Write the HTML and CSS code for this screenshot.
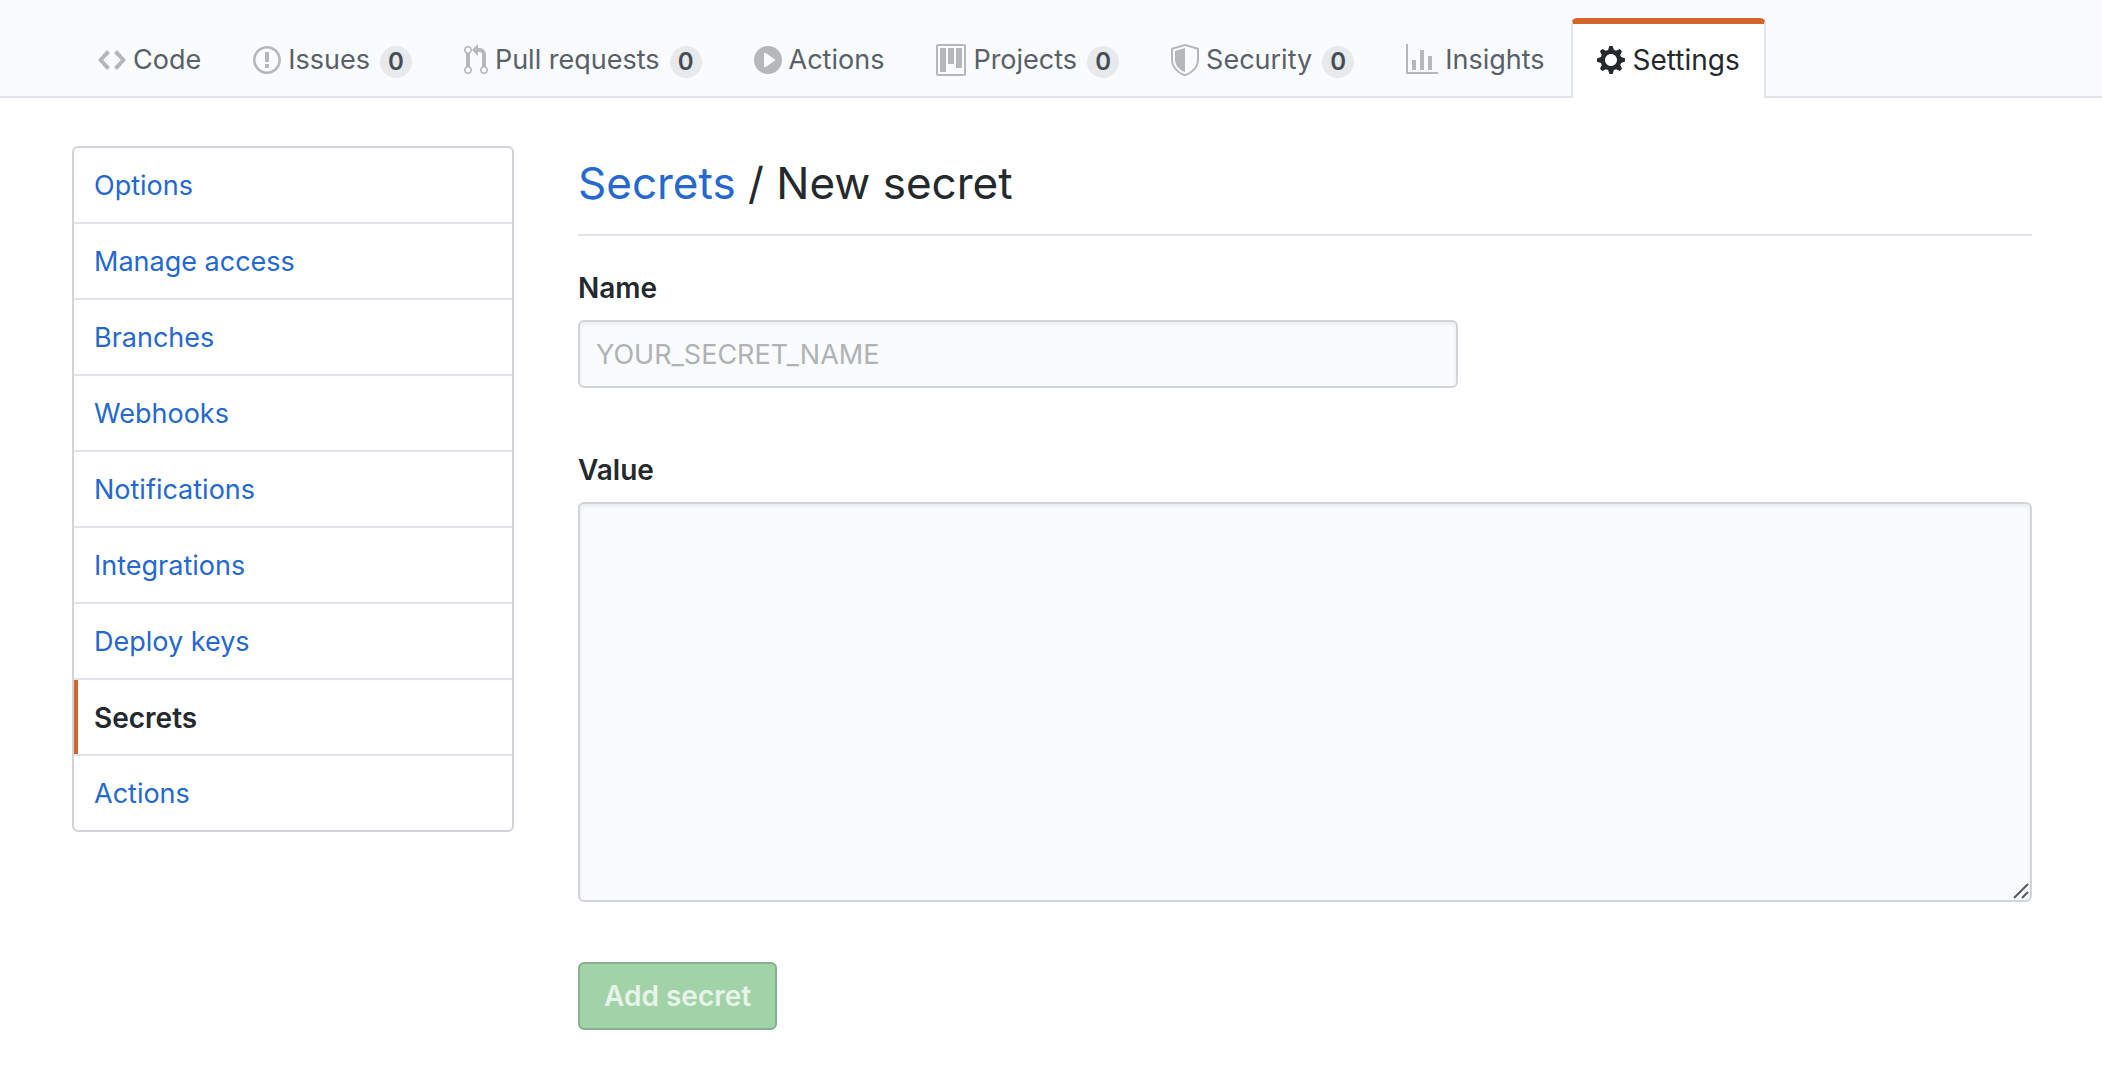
FILE: index.html
```html
<!DOCTYPE html>
<html lang="en">
<head>
    <meta charset="UTF-8">
    <meta name="viewport" content="width=device-width, initial-scale=1.0">
    <title>New secret</title>
    <link rel="stylesheet" href="styles.css">
</head>
<body>
    <header class="repohead">
        <nav class="tabs" aria-label="Repository">
            <a class="tab" href="#code">
                <svg class="icon" width="28" height="32" viewBox="0 0 14 16"><path fill-rule="evenodd" d="M9.5 3L8 4.5 11.5 8 8 11.5 9.5 13 14 8 9.5 3zm-5 0L0 8l4.5 5L6 11.5 2.5 8 6 4.5 4.5 3z"/></svg>
                <span>Code</span>
            </a>
            <a class="tab" href="#issues">
                <svg class="icon" width="28" height="32" viewBox="0 0 14 16"><path fill-rule="evenodd" d="M7 2.3c3.14 0 5.7 2.56 5.7 5.7s-2.56 5.7-5.7 5.7A5.71 5.71 0 011.3 8c0-3.14 2.56-5.7 5.7-5.7zM7 1C3.14 1 0 4.14 0 8s3.14 7 7 7 7-3.14 7-7-3.14-7-7-7zm1 3H6v5h2V4zm0 6H6v2h2v-2z"/></svg>
                <span>Issues</span>
                <span class="counter">0</span>
            </a>
            <a class="tab" href="#pulls">
                <svg class="icon" width="24" height="32" viewBox="0 0 12 16"><path fill-rule="evenodd" d="M11 11.28V5c-.03-.78-.34-1.47-.94-2.06C9.46 2.35 8.78 2.03 8 2H7V0L4 3l3 3V4h1c.27.02.48.11.69.31.21.2.3.42.31.69v6.28A1.993 1.993 0 0010 15a1.993 1.993 0 001-3.72zm-1 2.92c-.66 0-1.2-.55-1.2-1.2 0-.65.55-1.2 1.2-1.2.65 0 1.2.55 1.2 1.2 0 .65-.55 1.2-1.2 1.2zM4 3c0-1.11-.89-2-2-2a1.993 1.993 0 00-1 3.72v6.56A1.993 1.993 0 002 15a1.993 1.993 0 001-3.72V4.72c.59-.34 1-.98 1-1.72zm-.8 10c0 .66-.55 1.2-1.2 1.2-.65 0-1.2-.55-1.2-1.2 0-.65.55-1.2 1.2-1.2.65 0 1.2.55 1.2 1.2zM2 4.2C1.34 4.2.8 3.65.8 3c0-.65.55-1.2 1.2-1.2.65 0 1.2.55 1.2 1.2 0 .65-.55 1.2-1.2 1.2z"/></svg>
                <span>Pull requests</span>
                <span class="counter">0</span>
            </a>
            <a class="tab" href="#actions">
                <svg class="icon" width="28" height="32" viewBox="0 0 14 16"><path fill-rule="evenodd" d="M14 8A7 7 0 110 8a7 7 0 0114 0zm-8.223 3.482l4.599-3.066a.5.5 0 000-.832L5.777 4.518A.5.5 0 005 4.934v6.132a.5.5 0 00.777.416z"/></svg>
                <span>Actions</span>
            </a>
            <a class="tab" href="#projects">
                <svg class="icon" width="30" height="32" viewBox="0 0 15 16"><path fill-rule="evenodd" d="M10 12h3V2h-3v10zm-4-2h3V2H6v8zm-4 4h3V2H2v12zm-1 1h13V1H1v14zM14 0H1a1 1 0 00-1 1v14a1 1 0 001 1h13a1 1 0 001-1V1a1 1 0 00-1-1z"/></svg>
                <span>Projects</span>
                <span class="counter">0</span>
            </a>
            <a class="tab" href="#security">
                <svg class="icon" width="28" height="32" viewBox="0 0 14 16"><path fill-rule="evenodd" d="M0 2l7-2 7 2v6.02C14 12.69 8.69 16 7 16c-1.69 0-7-3.31-7-7.98V2zm1 .75L7 1l6 1.75v5.268C13 12.104 8.449 15 7 15c-1.449 0-6-2.896-6-6.982V2.75zm1 .75L7 2v12c-1.207 0-5-2.482-5-5.985V3.5z"/></svg>
                <span>Security</span>
                <span class="counter">0</span>
            </a>
            <a class="tab" href="#insights">
                <svg class="icon" width="32" height="32" viewBox="0 0 16 16"><path fill-rule="evenodd" d="M16 14v1H0V0h1v14h15zM5 13H3V8h2v5zm4 0H7V3h2v10zm4 0h-2V6h2v7z"/></svg>
                <span>Insights</span>
            </a>
            <a class="tab selected" href="#settings" aria-current="page">
                <svg class="icon" width="28" height="32" viewBox="0 0 14 16"><path fill-rule="evenodd" d="M14 8.77v-1.6l-1.94-.64-.45-1.09.88-1.84-1.13-1.13-1.81.91-1.09-.45-.69-1.92h-1.6l-.63 1.94-1.11.45-1.84-.88-1.13 1.13.91 1.81-.45 1.09L0 7.23v1.59l1.94.64.45 1.09-.88 1.84 1.13 1.13 1.81-.91 1.09.45.69 1.92h1.59l.63-1.94 1.11-.45 1.84.88 1.13-1.13-.92-1.81.47-1.09L14 8.75v.02zM7 11c-1.66 0-3-1.34-3-3s1.34-3 3-3 3 1.34 3 3-1.34 3-3 3z"/></svg>
                <span>Settings</span>
            </a>
        </nav>
    </header>

    <div class="container">
        <nav class="menu" aria-label="Settings">
            <a class="menu-item" href="#options">Options</a>
            <a class="menu-item" href="#access">Manage access</a>
            <a class="menu-item" href="#branches">Branches</a>
            <a class="menu-item" href="#hooks">Webhooks</a>
            <a class="menu-item" href="#notifications">Notifications</a>
            <a class="menu-item" href="#installations">Integrations</a>
            <a class="menu-item" href="#keys">Deploy keys</a>
            <a class="menu-item selected" href="#secrets" aria-current="page">Secrets</a>
            <a class="menu-item" href="#settings-actions">Actions</a>
        </nav>

        <main class="content">
            <h1 class="subhead"><a href="#secrets">Secrets</a> / New secret</h1>
            <form>
                <div class="form-group">
                    <label for="secret-name">Name</label>
                    <input class="form-control name-input" type="text" id="secret-name" placeholder="YOUR_SECRET_NAME">
                </div>
                <div class="form-group">
                    <label for="secret-value">Value</label>
                    <div class="textarea-wrap">
                        <textarea class="form-control" id="secret-value"></textarea>
                        <svg class="grip" width="16" height="16" viewBox="0 0 16 16"><path d="M1 15L15 1M9 15l6-6"/></svg>
                    </div>
                </div>
                <button class="btn" type="submit" disabled>Add secret</button>
            </form>
        </main>
    </div>
</body>
</html>
```
FILE: styles.css
```css
* {
    box-sizing: border-box;
}
body {
    margin: 0;
    background: #fff;
    color: #24292e;
    font-family: Inter, "Liberation Sans", sans-serif;
    font-size: 27px;
    line-height: 42px;
}
a {
    color: #2468d0;
    text-decoration: none;
}

/* repository tabs */
.repohead {
    background: #fafbfc;
    border-bottom: 2px solid #e1e4e8;
    padding: 18px 72px 0;
}
.tabs {
    display: flex;
    margin-bottom: -2px;
}
.tab {
    display: flex;
    align-items: center;
    height: 80px;
    padding: 0 24px 2px;
    border: 2px solid transparent;
    border-top-width: 6px;
    border-bottom: 0;
    border-radius: 6px 6px 0 0;
    color: #586069;
    white-space: nowrap;
}
.tab.selected {
    background: #fff;
    border-color: #d2662a #e1e4e8 transparent;
    color: #24292e;
    font-size: 28px;
}
.icon {
    flex: none;
    margin-right: 7px;
    fill: #b6b7b9;
}
.selected .icon {
    margin-right: 8px;
    fill: #24292e;
}
.counter {
    min-width: 32px;
    height: 32px;
    margin: 4px 0 0 10px;
    border-radius: 16px;
    background: #e8e9eb;
    color: #444d56;
    font-size: 24px;
    font-weight: 600;
    line-height: 32px;
    text-align: center;
}

.container {
    display: flex;
    align-items: flex-start;
    gap: 64px;
    padding: 48px 70px 48px 72px;
}

/* settings menu */
.menu {
    flex: none;
    width: 442px;
    border: 2px solid #d1d5da;
    border-radius: 6px;
    overflow: hidden;
}
.menu-item {
    display: block;
    padding: 17px 20px 15px;
    border-bottom: 2px solid #e1e4e8;
}
.menu-item:last-child {
    border-bottom: 0;
}
.menu-item.selected {
    color: #24292e;
    font-size: 28px;
    font-weight: 600;
    box-shadow: inset 4px 0 #d2662a;
}

/* form */
.content {
    flex: 1;
    min-width: 0;
}
.subhead {
    margin: 0 0 30px;
    padding: 2px 0 16px;
    border-bottom: 2px solid #e1e4e8;
    font-size: 44px;
    font-weight: 400;
    line-height: 70px;
}
.form-group {
    margin-bottom: 60px;
}
.form-group label {
    display: block;
    margin-bottom: 10px;
    font-size: 28px;
    font-weight: 600;
    line-height: 44px;
}
.form-control {
    display: block;
    width: 100%;
    padding: 12px 16px;
    border: 2px solid #d1d5da;
    border-radius: 6px;
    background: #fafbfc;
    box-shadow: inset 0 2px 4px rgba(27, 31, 35, 0.08);
    color: #24292e;
    font: inherit;
}
.form-control::placeholder {
    color: #b0b2b6;
    opacity: 1;
}
.name-input {
    max-width: 880px;
    height: 68px;
}
.textarea-wrap {
    position: relative;
}
textarea.form-control {
    height: 400px;
    resize: none;
}
.grip {
    position: absolute;
    right: 3px;
    bottom: 3px;
    fill: none;
    stroke: #58595b;
    stroke-width: 2;
    pointer-events: none;
}
.btn {
    height: 68px;
    padding: 0 24px;
    border: 2px solid #86b18d;
    border-radius: 6px;
    background: #a2d2a8;
    color: #e8f4ea;
    font: inherit;
    font-size: 28px;
    font-weight: 600;
}
```
